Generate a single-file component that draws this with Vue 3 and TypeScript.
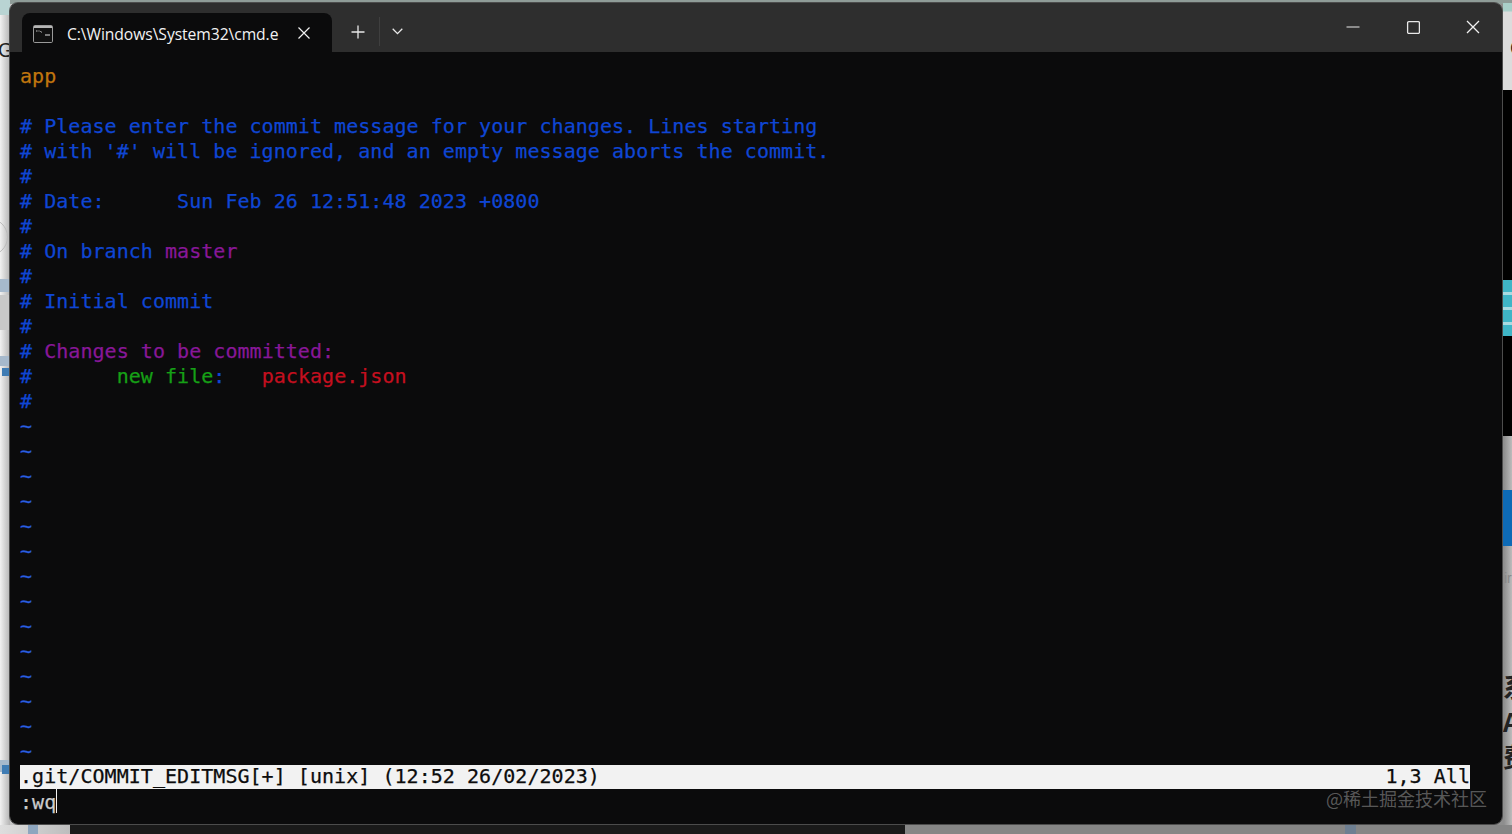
<script setup lang="ts">
type Seg = { t: string; c: string }
const b = 'blue', m = 'mag', g = 'grn', r = 'red', o = 'org'
const one = (t: string, c = b): Seg[] => [{ t, c }]
const lines: Seg[][] = [
  one('app', o),
  one(''),
  one('# Please enter the commit message for your changes. Lines starting'),
  one("# with '#' will be ignored, and an empty message aborts the commit."),
  one('#'),
  one('# Date:      Sun Feb 26 12:51:48 2023 +0800'),
  one('#'),
  [{ t: '# On branch ', c: b }, { t: 'master', c: m }],
  one('#'),
  one('# Initial commit'),
  one('#'),
  [{ t: '# ', c: b }, { t: 'Changes to be committed:', c: m }],
  [{ t: '#       ', c: b }, { t: 'new file', c: g }, { t: ':   ', c: b }, { t: 'package.json', c: r }],
  one('#'),
  ...Array.from({ length: 14 }, () => one('~', 'tilde'))
]
</script>

<template>
  <div class="desktop">
    <div class="bd top-strip"></div>
    <div class="bd left-strip"></div>
    <div class="bd left-cap"></div>
    <div class="bd g-letter">G</div>
    <div class="bd circle"></div>
    <div class="bd left-bar bar-a"></div>
    <div class="bd left-panel"></div>
    <div class="bd left-bar bar-b"></div>
    <div class="bd sq sq-a"></div>
    <div class="bd left-bar bar-c"></div>
    <div class="bd sq sq-b"></div>

    <div class="bd right-light"></div>
    <div class="bd right-c">C</div>
    <div class="bd right-black"></div>
    <div class="bd right-cyan"></div>
    <div class="bd right-blue"></div>
    <div class="bd right-ir">ir</div>
    <div class="bd right-cjk">系<br />A<br />费</div>

    <div class="bd bottom-left"></div>
    <div class="bd bottom-sq"></div>
    <div class="bd bottom-dark"></div>
    <div class="bd bottom-gray"></div>
    <div class="bd bottom-sq2"></div>

    <div class="window">
      <header class="titlebar">
        <div class="tab">
          <svg class="cmd-icon" width="20" height="18" viewBox="0 0 20 18">
            <rect x="0.5" y="0.5" width="19" height="17" rx="1.2" fill="#101010" stroke="#9a9a9a" />
            <rect x="1" y="1" width="18" height="2" fill="#b5b5b5" />
            <path d="M3 6h1.5M5.5 6h1M7.5 6l1 1.5" fill="none" stroke="#c8c8c8" stroke-width="1" />
            <path d="M12 10h5" fill="none" stroke="#e6e6e6" stroke-width="1" />
          </svg>
          <span class="tab-title">C:\Windows\System32\cmd.e</span>
          <svg class="tab-close" width="12" height="12" viewBox="0 0 12 12">
            <path d="M0.5 0.5l11 11M11.5 0.5l-11 11" stroke="#f0f0f0" stroke-width="1.2" fill="none" />
          </svg>
        </div>
        <svg class="plus" width="14" height="14" viewBox="0 0 14 14">
          <path d="M7 0.5v13M0.5 7h13" stroke="#e8e8e8" stroke-width="1.3" fill="none" />
        </svg>
        <span class="divider"></span>
        <svg class="chev" width="11" height="7" viewBox="0 0 11 7">
          <path d="M0.7 0.8l4.8 4.8 4.8-4.8" stroke="#e8e8e8" stroke-width="1.3" fill="none" />
        </svg>
        <div class="controls">
          <svg width="14" height="14" viewBox="0 0 14 14">
            <path d="M0.5 7h13" stroke="#e8e8e8" stroke-width="1.2" fill="none" />
          </svg>
          <svg width="14" height="14" viewBox="0 0 14 14">
            <rect x="1.6" y="1.6" width="11.8" height="11.8" rx="1.2" stroke="#e8e8e8" stroke-width="1.3" fill="none" />
          </svg>
          <svg width="14" height="14" viewBox="0 0 14 14">
            <path d="M1 1l12 12M13 1L1 13" stroke="#f0f0f0" stroke-width="1.3" fill="none" />
          </svg>
        </div>
      </header>

      <main class="term">
        <div v-for="(line, i) in lines" :key="i" class="line">
          <span v-for="(seg, j) in line" :key="j" :class="seg.c">{{ seg.t }}</span>
        </div>
        <div class="line status">
          <span>.git/COMMIT_EDITMSG[+] [unix] (12:52 26/02/2023)</span>
          <span>1,3 All</span>
        </div>
        <div class="line cmd">:wq<span class="cursor"></span></div>
      </main>

      <div class="watermark">@稀土掘金技术社区</div>
    </div>
  </div>
</template>

<style scoped>
.desktop {
  position: relative;
  width: 1512px;
  height: 834px;
  overflow: hidden;
  background: linear-gradient(90deg, #ececec 0, #c4c4c4 10px, #8e8e8e 1504px, #bcbcbc 1512px);
}
.bd { position: absolute; }
.top-strip { left: 0; top: 0; width: 1512px; height: 4px; background: #8f9c98; }
.left-strip { left: 0; top: 14px; width: 10px; height: 820px; background: linear-gradient(90deg, #f1f1f1, #b4b4b4); }
.left-cap { left: 0; top: 0; width: 10px; height: 15px; background: #b9d4d3; }
.g-letter { left: -2px; top: 40px; font: 20px/20px "Liberation Sans", sans-serif; color: #222; }
.circle { left: -30px; top: 218px; width: 36px; height: 36px; border: 1px solid #bbb; border-radius: 50%; }
.left-bar { left: 0; width: 9px; background: #a6b9cc; }
.bar-a { top: 279px; height: 13px; }
.left-panel { left: 0; top: 295px; width: 9px; height: 35px; background: #c8c8c8; }
.bar-b { top: 356px; height: 10px; }
.sq { left: 2px; width: 7px; background: #3f7cb4; }
.sq-a { top: 368px; height: 8px; }
.bar-c { top: 760px; height: 12px; }
.sq-b { top: 765px; height: 9px; }
.right-light { left: 1503px; top: 3px; width: 9px; height: 87px; background: linear-gradient(#a9cfc9 0, #a9cfc9 8px, #dcdcdc 9px); }
.right-c { left: 1510px; top: 38px; font: 20px/20px "Liberation Sans", sans-serif; color: #222; }
.right-black { left: 1503px; top: 90px; width: 9px; height: 346px; background: #000; }
.right-cyan { left: 1503px; top: 280px; width: 9px; height: 56px; background: repeating-linear-gradient(#3fb5c6 0, #3fb5c6 12px, #a9dbe2 12px, #a9dbe2 15px); }
.right-blue { left: 1503px; top: 490px; width: 9px; height: 56px; background: #0e6ab5; }
.right-ir { left: 1504px; top: 570px; font: 14px/16px "Liberation Sans", sans-serif; color: #888; }
.right-cjk { left: 1503px; top: 668px; width: 9px; overflow: hidden; font: 700 26px/35px "Noto Sans CJK SC", sans-serif; color: #222; }
.bottom-left { left: 0; top: 825px; width: 70px; height: 9px; background: linear-gradient(90deg, #dedede, #bdbdbd); }
.bottom-sq { left: 28px; top: 825px; width: 10px; height: 9px; background: #8ea6bf; }
.bottom-dark { left: 70px; top: 825px; width: 835px; height: 9px; background: #1a1a1a; }
.bottom-gray { left: 905px; top: 825px; width: 607px; height: 9px; background: #868686; }
.bottom-sq2 { left: 1345px; top: 825px; width: 11px; height: 9px; background: #6e7f92; }

.window {
  position: absolute;
  left: 10px;
  top: 3px;
  width: 1492px;
  height: 821px;
  display: flex;
  flex-direction: column;
  border-radius: 8px;
  overflow: hidden;
  background: #0b0b0c;
  outline: 1px solid #4c4c4c;
}
.titlebar {
  flex: 0 0 49px;
  display: flex;
  align-items: flex-end;
  background: #2e2e2e;
}
.tab {
  width: 310px;
  height: 39px;
  margin-left: 12px;
  box-sizing: border-box;
  padding-left: 11px;
  display: flex;
  align-items: center;
  border-radius: 8px 8px 0 0;
  background: #0b0b0c;
}
.cmd-icon { flex: none; margin-top: 2px; }
.tab-title {
  margin-left: 14px;
  margin-top: 2px;
  width: 212px;
  white-space: nowrap;
  font: 500 15.7px/20px "Open Sans", sans-serif;
  letter-spacing: -0.08px;
  color: #f2f2f2;
}
.tab-close { flex: none; margin-left: 19px; }
.plus { flex: none; margin: 0 0 13px 19px; }
.divider { flex: none; width: 1px; height: 29px; margin: 0 0 6px 14px; background: #3f3f3f; }
.chev { flex: none; margin: 0 0 17px 12px; }
.controls {
  margin-left: auto;
  margin-right: 22px;
  margin-bottom: 18px;
  display: flex;
  gap: 46px;
}
.term {
  flex: 1;
  box-sizing: border-box;
  padding: 12px 10px 0;
  font-family: "DejaVu Sans Mono", monospace;
  font-size: 20px;
  letter-spacing: 0.04px;
  -webkit-text-stroke: 0.25px currentColor;
  background: #0b0b0c;
}
.line {
  height: 25px;
  line-height: 25px;
  white-space: pre;
}
.blue { color: #0f46d4; }
.tilde { color: #2a5fe2; }
.mag { color: #881798; }
.grn { color: #16a016; }
.red { color: #c50f1f; }
.org { color: #c1760e; }
.status {
  width: 1450px;
  height: 24px;
  line-height: 23px;
  margin-top: 1px;
  display: flex;
  justify-content: space-between;
  background: #f2f2f2;
  color: #0c0c0c;
}
.cmd { position: relative; line-height: 27px; color: #cccccc; }
.cursor {
  position: absolute;
  left: 36px;
  top: 0;
  width: 1px;
  height: 24px;
  background: #f2f2f2;
}
.watermark {
  position: absolute;
  right: 15px;
  top: 786px;
  font: 18px/18px "Noto Sans CJK SC", sans-serif;
  color: rgba(255, 255, 255, 0.32);
}
</style>
